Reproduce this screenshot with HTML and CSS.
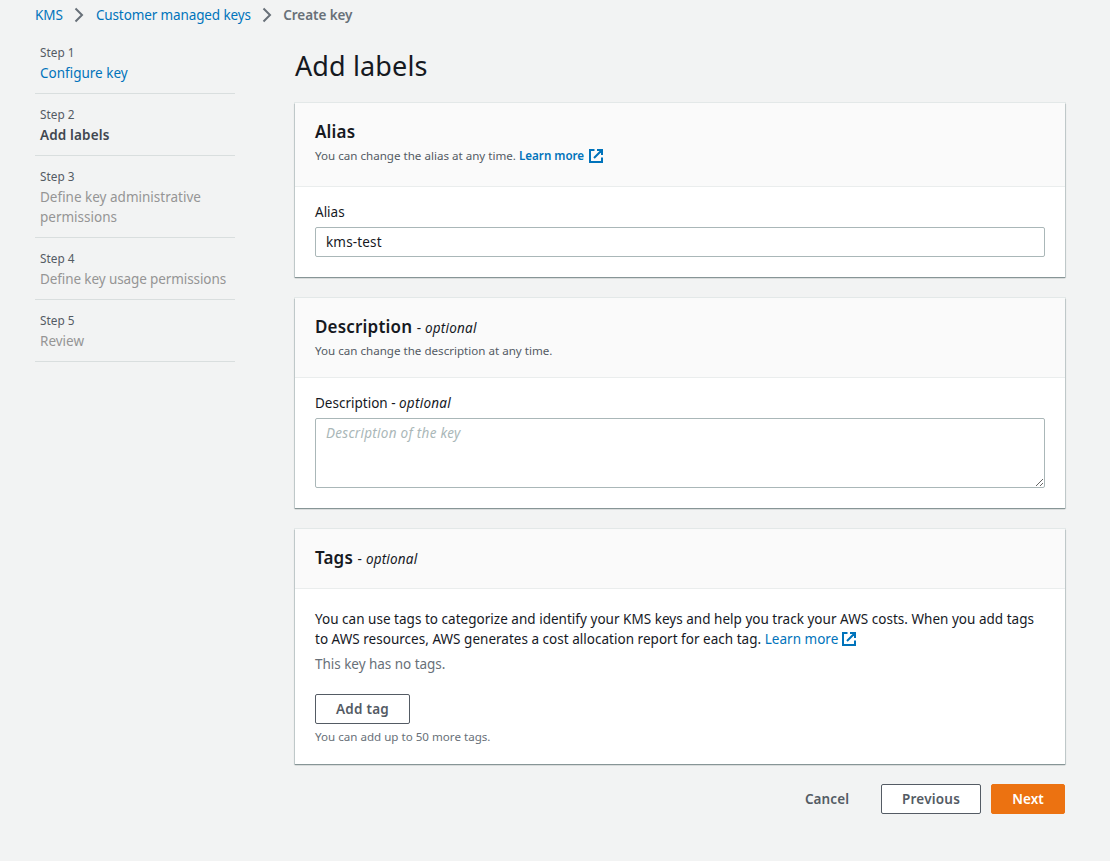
FILE: index.html
```
<!DOCTYPE html>
<html lang="en">
<head>
<meta charset="utf-8">
<title>Create key</title>
<link rel="stylesheet" href="styles.css">
</head>
<body>
<svg class="sprite" width="0" height="0" aria-hidden="true">
  <symbol id="chevron" viewBox="0 0 10 16"><path d="M1.5 1.5 8 8l-6.5 6.5" fill="none" stroke="#687078" stroke-width="2"/></symbol>
  <symbol id="external" viewBox="0 0 14 14"><path d="M5.5 1H1v12h12V8.5M8 1h5v5M12.5 1.5 5 9" fill="none" stroke="#0073bb" stroke-width="2"/></symbol>
</svg>
<nav class="breadcrumb">
  <a class="link crumb-root">KMS</a>
  <svg class="chevron"><use href="#chevron"/></svg>
  <a class="link crumb-keys">Customer managed keys</a>
  <svg class="chevron"><use href="#chevron"/></svg>
  <span class="crumb-current">Create key</span>
</nav>
<div class="layout">
  <ol class="steps">
    <li class="step"><small class="step-no">Step 1</small><a class="link">Configure key</a></li>
    <li class="step"><small class="step-no">Step 2</small><b class="active">Add labels</b></li>
    <li class="step"><small class="step-no">Step 3</small><span class="pending">Define key administrative permissions</span></li>
    <li class="step"><small class="step-no">Step 4</small><span class="pending tight">Define key usage permissions</span></li>
    <li class="step"><small class="step-no">Step 5</small><span class="pending">Review</span></li>
  </ol>
  <main class="main">
    <h1 class="title">Add labels</h1>
    <section class="card alias">
      <header class="card-head alias-head">
        <h2 class="heading">Alias</h2>
        <p class="sub">You can change the alias at any time. <a class="link strong">Learn more</a><svg class="external"><use href="#external"/></svg></p>
      </header>
      <div class="card-body">
        <label class="label" for="alias">Alias</label>
        <input class="field" id="alias" value="kms-test">
      </div>
    </section>
    <section class="card description">
      <header class="card-head description-head">
        <h2 class="heading">Description <span class="optional">- <i>optional</i></span></h2>
        <p class="sub">You can change the description at any time.</p>
      </header>
      <div class="card-body">
        <label class="label" for="desc">Description - <i class="wide">optional</i></label>
        <textarea class="field area" id="desc" placeholder="Description of the key"></textarea>
      </div>
    </section>
    <section class="card">
      <header class="card-head tags-head">
        <h2 class="heading">Tags <span class="optional">- <i>optional</i></span></h2>
      </header>
      <div class="card-body tags-body">
        <p class="intro">You can use tags to categorize and identify your KMS keys and help you track your AWS costs. When you add tags<br>to AWS resources, AWS generates a cost allocation report for each tag. <a class="link">Learn more</a><svg class="external intro-icon"><use href="#external"/></svg></p>
        <p class="empty">This key has no tags.</p>
        <button class="btn add">Add tag</button>
        <p class="hint">You can add up to 50 more tags.</p>
      </div>
    </section>
    <footer class="actions">
      <button class="btn cancel">Cancel</button>
      <button class="btn previous">Previous</button>
      <button class="btn next">Next</button>
    </footer>
  </main>
</div>
</body>
</html>
```
FILE: styles.css
```
* { box-sizing: border-box; }
body, h1, h2, p, ol { margin: 0; padding: 0; }
body {
  min-height: 861px;
  padding: 5px 45px 0 35px;
  background: #f2f3f3;
  color: #16191f;
  font: 13.5px/20px "Noto Sans", sans-serif;
}
.sprite { display: block; }
.link { color: #0073bb; text-decoration: none; }

.breadcrumb { display: flex; align-items: center; height: 20px; }
.crumb-keys { letter-spacing: -0.12px; }
.crumb-current { color: #687078; font-weight: 600; letter-spacing: -0.08px; }
.chevron { width: 10px; height: 16px; margin: 0 11.5px 0 11px; }
.crumb-root { width: 28.4px; }

.layout { display: grid; grid-template-columns: 200px 770px; column-gap: 60px; }
.steps { padding-top: 7px; list-style: none; }
.step { display: flex; flex-direction: column; padding: 10px 5px; border-bottom: 1px solid #d9dede; }
.step-no { margin-bottom: 1px; color: #545b64; font-size: 11.8px; line-height: 20px; }
.active { color: #414750; font-weight: 600; letter-spacing: .15px; }
.pending { color: #959595; }
.tight { letter-spacing: -.1px; }

.main { padding-top: 21px; }
.title { height: 40px; margin-bottom: 17px; font-size: 27px; font-weight: 400; line-height: 40px; letter-spacing: .12px; }
.card {
  margin-bottom: 20px;
  background: #fff;
  box-shadow: 0 1px 1px #879596, 1px 1px 1px rgba(0, 28, 36, .1), -1px 1px 1px rgba(0, 28, 36, .1), 0 0 0 1px #e3e8e8;
}
.alias { margin-bottom: 21px; }
.description { margin-bottom: 21px; }
.card-head { padding: 19px 20px 16px; border-bottom: 1px solid #eaeded; background: #fafafa; }
.alias-head { padding-top: 18px; padding-bottom: 20px; }
.alias-head .sub { padding-top: 2px; margin-bottom: -1px; }
.description-head { padding-top: 18px; }
.tags-head { padding: 18px 20px; }
.heading { font-size: 17px; font-weight: 600; line-height: 22px; letter-spacing: .18px; }
.sub { color: #545b64; font-size: 11.6px; line-height: 22px; }
.description .sub { padding-top: 1px; margin-bottom: -1px; }
.strong { font-weight: 600; }
.external { width: 14px; height: 14px; margin-left: 5px; vertical-align: -3px; }
.intro-icon { margin-left: 4px; vertical-align: -2px; }
.optional { font-size: 13.5px; font-weight: 400; letter-spacing: .2px; }
.card-body { padding: 15px 20px 20px; }
.label { display: block; margin-bottom: 5px; }
.wide { letter-spacing: .25px; }
.field {
  display: block; width: 100%; height: 30px; margin: 0; padding: 4px 10px;
  border: 1px solid #aab7b8; border-radius: 2px; background: #fff;
  color: #16191f; font: inherit; letter-spacing: .15px; outline: 0;
}
.area { height: 70px; resize: vertical; }
.area::placeholder { color: #aab7b8; font-style: italic; letter-spacing: .28px; }
.tags-body { padding-top: 20px; padding-bottom: 19px; }
.intro { letter-spacing: .022px; white-space: nowrap; }
.empty { margin: 5px 0 20px; color: #687078; letter-spacing: -.03px; }
.hint { margin-top: 5px; color: #687078; font-size: 11.6px; line-height: 16px; }
.btn {
  display: block; height: 30px; padding: 0; border: 1px solid #545b64; border-radius: 2px;
  background: #fff; color: #545b64; font: 600 13.5px/20px "Noto Sans", sans-serif; letter-spacing: .22px;
}
.add { width: 95px; }
.actions { display: flex; justify-content: flex-end; }
.cancel { width: 86px; margin-right: 11px; border-color: transparent; background: transparent; letter-spacing: .1px; }
.previous { width: 100px; margin-right: 10px; }
.next { width: 74px; border-color: #ec7211; background: #ec7211; color: #fff; letter-spacing: .03px; }
```
